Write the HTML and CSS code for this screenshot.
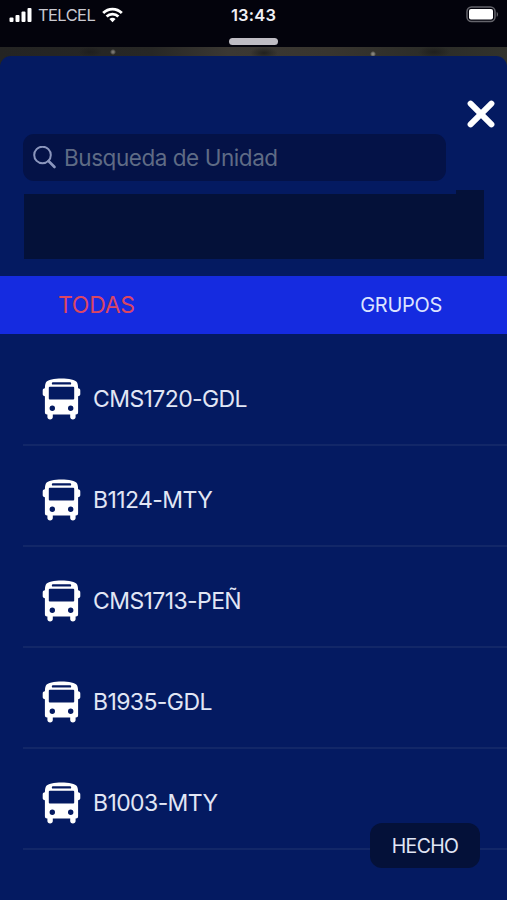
FILE: index.html
```html
<!DOCTYPE html>
<html lang="es">
<head>
  <meta charset="UTF-8">
  <meta name="viewport" content="width=device-width, initial-scale=1.0">
  <title>Unidades</title>
  <link rel="stylesheet" href="styles.css">
</head>
<body>
  <!-- Shared bus icon -->
  <svg class="symbols" width="0" height="0">
    <symbol id="bus" viewBox="0 0 38 42">
      <path fill="currentColor" fill-rule="evenodd" d="M3.400 4.500C4.800 1.600 12 .5 19 .5s14.200 1.100 15.600 4c.7 1.500 1 3.500 1 5.700 1.500.1 2.200.9 2.200 2.200v3.700c0 1.300-.8 2.100-2.200 2.200v16c0 1.400-.8 2.200-2.100 2.200h-.4V39c0 1.500-1.100 2.400-2.700 2.400s-2.700-.9-2.700-2.400v-2.500H10.300V39c0 1.500-1.100 2.400-2.700 2.400S4.900 40.500 4.900 39v-2.500h-.4c-1.300 0-2.100-.8-2.100-2.200v-16C1 18.200.2 17.400.2 16.100v-3.700c0-1.300.7-2.100 2.200-2.200 0-2.200.3-4.200 1-5.700zM10.500 4.200a1.200 1.200 0 0 0 0 2.400h17a1.200 1.200 0 0 0 0-2.400zM7.300 8.700a1 1 0 0 0-1 1v10.700a1 1 0 0 0 1 1h23.400a1 1 0 0 0 1-1V9.700a1 1 0 0 0-1-1zM9.800 27.500a2.700 2.700 0 1 0 0 5.400 2.700 2.700 0 0 0 0-5.400zM28.200 27.500a2.700 2.700 0 1 0 0 5.400 2.700 2.700 0 0 0 0-5.400z"/>
    </symbol>
  </svg>

  <header class="status-bar">
    <div class="carrier">
      <svg width="24" height="15" viewBox="0 0 24 15" fill="#fff">
        <rect x="0.500" y="9.500" width="4" height="4.500" rx="1"/>
        <rect x="6.500" y="7" width="4" height="7" rx="1"/>
        <rect x="12.500" y="3.500" width="4" height="10.500" rx="1"/>
        <rect x="18.500" y="0" width="4" height="14" rx="1"/>
      </svg>
      <span class="carrier-name">TELCEL</span>
      <svg class="wifi" width="21" height="16" viewBox="0 0 21 16" fill="none" stroke="#fff" stroke-width="2.800">
        <path d="M1.200 6C6.400 .7 14.600 .7 19.800 6"/>
        <path d="M4.600 9.500c3.300-3.300 8.500-3.300 11.800 0"/>
        <path d="M10.500 15.200l-3.100-3.100c1.700-1.700 4.500-1.700 6.200 0z" fill="#fff" stroke="none"/>
      </svg>
    </div>
    <span class="time">13:43</span>
    <svg class="battery" width="34" height="18" viewBox="0 0 34 18">
      <rect x="2" y="1" width="28" height="14.500" rx="4.500" fill="none" stroke="#64646b" stroke-width="1.500"/>
      <rect x="4" y="3" width="24" height="10.500" rx="2" fill="#fff"/>
      <path d="M31.700 6c1.700.6 1.700 4.200 0 4.800z" fill="#64646b"/>
    </svg>
    <div class="grabber"></div>
  </header>

  <div class="backdrop">
    <main class="sheet">
      <div class="close-row">
        <button class="close" aria-label="Cerrar">
          <svg width="28" height="28" viewBox="0 0 28 28" stroke="#fff" stroke-width="6" stroke-linecap="round">
            <path d="M3.600 3.600l20.800 20.800M24.400 3.600L3.600 24.400"/>
          </svg>
        </button>
      </div>

      <div class="search">
        <svg width="24" height="24" viewBox="0 0 24 24" fill="none" stroke="#8b96bd" stroke-width="2">
          <circle cx="9.500" cy="9" r="8.300"/>
          <path d="M15.500 15l6 6" stroke-width="2.600" stroke-linecap="round"/>
        </svg>
        <span class="placeholder">Busqueda de Unidad</span>
      </div>

      <div class="blank-area"></div>

      <nav class="tabs">
        <span class="tab active">TODAS</span>
        <span class="tab">GRUPOS</span>
      </nav>

      <ul class="units">
        <li class="unit"><svg class="bus"><use href="#bus"/></svg><span class="name">CMS1720-GDL</span></li>
        <li class="unit"><svg class="bus"><use href="#bus"/></svg><span class="name">B1124-MTY</span></li>
        <li class="unit"><svg class="bus"><use href="#bus"/></svg><span class="name">CMS1713-PEÑ</span></li>
        <li class="unit"><svg class="bus"><use href="#bus"/></svg><span class="name">B1935-GDL</span></li>
        <li class="unit"><svg class="bus"><use href="#bus"/></svg><span class="name">B1003-MTY</span></li>
      </ul>

      <button class="done">HECHO</button>
    </main>
  </div>
</body>
</html>
```

FILE: styles.css
```css
* {
  box-sizing: border-box;
}
body {
  margin: 0;
  height: 900px;
  overflow: hidden;
  font-family: Inter, "Liberation Sans", sans-serif;
  background-color: #041a61;
  color: #e1e6f5;
}
svg {
  display: block;
  flex: none;
}
.symbols {
  display: none;
}
button {
  border: none;
  padding: 0;
  font-family: inherit;
  color: inherit;
  cursor: pointer;
}

/* Status bar */
.status-bar {
  display: grid;
  grid-template-columns: 1fr auto 1fr;
  grid-template-rows: 30px 17px;
  align-items: center;
  height: 47px;
  padding: 0 9px;
  background-color: #03030c;
}
.carrier {
  display: flex;
  align-items: center;
}
.carrier-name {
  margin-left: 5px;
  width: 64px;
  font-size: 16.5px;
  line-height: 30px;
  letter-spacing: -0.6px;
  color: #c9c9d0;
}
.time {
  font-size: 16.5px;
  font-weight: 600;
  letter-spacing: 0.2px;
  color: #f0f0f5;
}
.battery {
  justify-self: end;
  margin-right: -1px;
}
.grabber {
  grid-column: 1 / -1;
  justify-self: center;
  width: 49px;
  height: 7px;
  margin-top: 6px;
  border-radius: 4px;
  background-color: #bfbdc4;
}

/* Strip of the map behind the sheet */
.backdrop {
  padding-top: 9px;
  background:
    radial-gradient(circle at 113px 5px, #77756f 0 1px, transparent 3px),
    radial-gradient(circle at 373px 7px, #85847c 0 1px, transparent 3px),
    radial-gradient(ellipse 12px 5px at 90px 5px, #1e1e1e, transparent),
    radial-gradient(ellipse 14px 6px at 264px 6px, #20201e, transparent),
    radial-gradient(ellipse 16px 6px at 434px 5px, #1f1f1d, transparent),
    linear-gradient(90deg, #242423, #272725 30%, #3b3833 45%, #38352f 65%, #2b2c28 85%, #32322c);
}
.sheet {
  position: relative;
  display: flex;
  flex-direction: column;
  height: 844px;
  border-radius: 11px 11px 0 0;
  background-color: #041a61;
}
.close-row {
  display: flex;
  justify-content: flex-end;
  height: 78px;
  padding: 44px 12px 0 0;
}
.close {
  height: 28px;
  background: none;
}

/* Search */
.search {
  display: flex;
  align-items: center;
  width: 423px;
  height: 47px;
  margin-left: 23px;
  padding-left: 10px;
  border-radius: 11px;
  background-color: #041247;
}
.placeholder {
  margin-left: 7px;
  font-size: 22.5px;
  letter-spacing: -0.45px;
  color: #5f6b85;
}
.blank-area {
  width: 460px;
  height: 69px;
  margin: 9px 0 17px 24px;
  background-color: #041139;
  clip-path: polygon(0 4px, 432px 4px, 432px 0, 100% 0, 100% 100%, 0 100%);
}

/* Tabs */
.tabs {
  display: flex;
  justify-content: space-between;
  align-items: center;
  height: 58px;
  padding: 0 65px 0 58px;
  background-color: #152be0;
}
.tab {
  font-size: 20px;
  letter-spacing: -0.3px;
  color: #dce3ff;
}
.tab.active {
  font-size: 23px;
  color: #db4664;
}

/* Unit list */
.units {
  list-style: none;
  margin: 0;
  padding: 11px 0 0 23px;
}
.unit {
  display: flex;
  align-items: center;
  height: 101px;
  padding: 8px 0 0 19px;
  border-bottom: 2px solid #122768;
}
.bus {
  width: 39px;
  height: 42px;
  color: #fff;
}
.name {
  margin-left: 12px;
  font-size: 23px;
  letter-spacing: -0.6px;
}

.done {
  position: absolute;
  right: 27px;
  bottom: 32px;
  width: 110px;
  height: 45px;
  border-radius: 12px;
  font-size: 19.5px;
  letter-spacing: -0.7px;
  background-color: #041139;
}
```
